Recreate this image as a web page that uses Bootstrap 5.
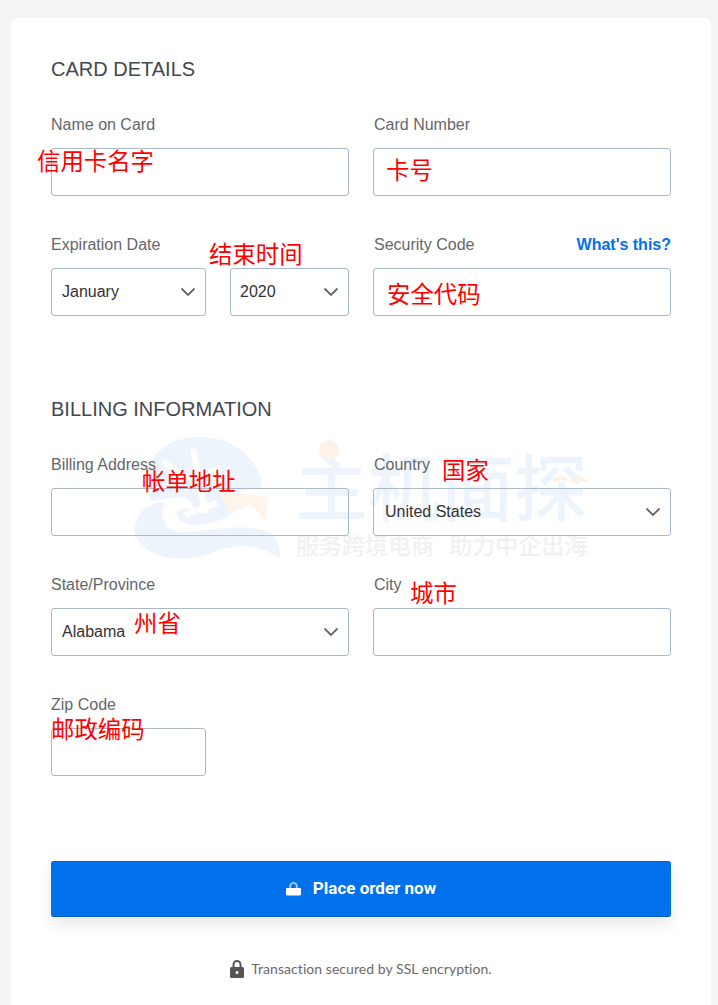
<!DOCTYPE html>
<html lang="en">
<head>
<meta charset="utf-8">
<title>Checkout</title>
<link href="https://cdn.jsdelivr.net/npm/bootstrap@5.3.0/dist/css/bootstrap.min.css" rel="stylesheet">
<style>
html,body{height:100%;overflow:hidden}
body{background:#f4f4f4;font-family:"Liberation Sans",Arial,sans-serif;color:#555}
.sheet{position:relative;margin:18px 7px 0 11px;background:#fff;border-radius:6px 6px 0 0;padding:39px 40px 0;height:987px;overflow:hidden}
.sec-title{font-size:20px;line-height:24px;font-weight:400;color:#44474d;margin:0}
.sec-gap-a{margin-top:32px}
.sec-gap-b{margin-top:81px}
.frow{margin-top:37px}
.frow.first{margin-top:0}
.flabel{display:block;font-size:16px;line-height:24px;height:24px;margin:0 0 11px;color:#63676b}
.rcol .flabel{padding-left:1px}
.finput,.fselect{display:block;width:100%;height:48px;border:1px solid #a9bac8;border-radius:3px;background-color:transparent;font-size:16px;color:#333;padding:0 10px;font-family:inherit}
.rcol .fselect{padding-left:11px}
.fselect{appearance:none;background-image:url("data:image/svg+xml,%3Csvg xmlns='http://www.w3.org/2000/svg' width='16' height='10' viewBox='0 0 16 10'%3E%3Cpath d='M1.500 1.500 8 8l6.500-6.500' fill='none' stroke='%23666' stroke-width='1.800'/%3E%3C/svg%3E");background-repeat:no-repeat;background-position:right 9px center}
.whats{font-size:16px;font-weight:700;color:#0070eb;text-decoration:none;line-height:24px}
.month-w{width:155px}
.year-w{width:119px;padding-left:9px}
.zip-w{width:155px}
.order-btn{display:flex;align-items:center;justify-content:center;gap:12px;width:100%;height:56px;margin-top:85px;background:#0071eb;border:0;border-bottom:1px solid #005cc0;border-top:1px solid #0063cf;border-radius:3px;color:#fff;font-size:17px;font-weight:700;box-shadow:0 8px 16px rgba(0,0,0,.09);font-family:Roboto,"Liberation Sans",sans-serif}
.secure{display:flex;align-items:center;justify-content:center;gap:7px;margin-top:40px;font-family:Lato,"Open Sans",sans-serif;font-size:14px;letter-spacing:.05px;line-height:24px;color:#6a6a6a}
.note{position:absolute;color:#f00;font-family:"Noto Sans CJK SC",sans-serif;font-size:23.400px;line-height:30px;white-space:nowrap;z-index:3}
.mark-w{position:absolute;left:0;top:0;width:100%;height:100%;pointer-events:none;z-index:0}
.mark-t{position:absolute;left:284px;top:420px;font-family:"Noto Sans CJK SC",sans-serif;font-size:73px;line-height:90px;font-weight:500;color:#edf4fb;white-space:nowrap}
.mark-s{position:absolute;left:285px;top:510px;font-family:"Noto Sans CJK SC",sans-serif;font-size:23px;line-height:32px;font-weight:500;color:#f1f1f1;white-space:nowrap;word-spacing:10px}
.mark-i{position:absolute;left:122px;top:419px}
.mark-d{position:absolute;left:306px;top:422px}
.sheet>*:not(.mark-w):not(.note){position:relative;z-index:1}
</style>
</head>
<body>
<div class="sheet">
  <div class="mark-w">
    <div class="mark-t">主机面探</div>
    <div class="mark-s">服务跨境电商 助力中企出海</div>
    <svg class="mark-i" width="150" height="130" viewBox="0 0 150 130" aria-hidden="true">
      <path d="M20 64C8 52 12 24 30 11 48-3 80-3 100 8c18 10 28 26 29 42L89 56l9 22C85 85 72 88 58 88 50 86 44 82 44 76c4-6 12-6 16-2 2-8-6-14-16-14-10 1-18 3-24 4z" fill="#edf4fb"/>
      <path d="M1 94C3 74 17 64 33 65 27 72 28 88 38 92 58 100 90 86 125 92c17 3 23 13 22 30-17-14-42-17-67-7-25 11-70 10-79-21z" fill="#edf4fb"/>
      <path d="M60 12 72 76M52 78 84 66M30 24l24 20M66 38l22-6" fill="none" stroke="#fff" stroke-width="6"/>
      <path d="m87 54 48 6-2 24-16-17-20 10z" fill="#fdf4ea"/>
    </svg>
    <svg class="mark-d" width="300" height="60" viewBox="0 0 300 60" aria-hidden="true">
      <circle cx="12" cy="10" r="10" fill="#fdf2e8"/>
      <path d="M236 41c5-5 10-5 15-1-5-1-10-1-15 1zM254 41c5-5 10-5 15 0-5-1-10-1-15 0z" fill="#fdf2e8" stroke="#fdf2e8" stroke-width="2"/>
    </svg>
  </div>

  <h2 class="sec-title">CARD DETAILS</h2>
  <div class="sec-gap-a">
    <div class="row gx-4 frow first">
      <div class="col-6"><label class="flabel">Name on Card</label><input class="finput" type="text"></div>
      <div class="col-6 rcol"><label class="flabel">Card Number</label><input class="finput" type="text"></div>
    </div>
    <div class="row gx-4 frow">
      <div class="col-6">
        <label class="flabel">Expiration Date</label>
        <div class="d-flex justify-content-between">
          <select class="fselect month-w"><option>January</option></select>
          <select class="fselect year-w"><option>2020</option></select>
        </div>
      </div>
      <div class="col-6 rcol">
        <div class="d-flex justify-content-between"><label class="flabel">Security Code</label><a class="whats" href="#">What's this?</a></div>
        <input class="finput" type="text">
      </div>
    </div>
  </div>

  <h2 class="sec-title sec-gap-b">BILLING INFORMATION</h2>
  <div class="sec-gap-a">
    <div class="row gx-4 frow first">
      <div class="col-6"><label class="flabel">Billing Address</label><input class="finput" type="text"></div>
      <div class="col-6 rcol"><label class="flabel">Country</label><select class="fselect"><option>United States</option></select></div>
    </div>
    <div class="row gx-4 frow">
      <div class="col-6"><label class="flabel">State/Province</label><select class="fselect"><option>Alabama</option></select></div>
      <div class="col-6 rcol"><label class="flabel">City</label><input class="finput" type="text"></div>
    </div>
    <div class="row gx-4 frow">
      <div class="col-6"><label class="flabel">Zip Code</label><input class="finput zip-w" type="text"></div>
    </div>
  </div>

  <button class="order-btn" type="button">
    <svg width="15" height="14" viewBox="0 0 16 14" aria-hidden="true"><path d="M4.500 6V4a3.500 3.500 0 0 1 7 0v2" fill="none" stroke="#a9cdf7" stroke-width="2"/><path d="M1 6h14a1 1 0 0 1 1 1v5.500a1.500 1.500 0 0 1-1.500 1.500h-13A1.500 1.500 0 0 1 0 12.500V7a1 1 0 0 1 1-1z" fill="#fff"/></svg>
    <span>Place order now</span>
  </button>
  <div class="secure">
    <svg width="14" height="18" viewBox="0 0 14 18" aria-hidden="true"><path d="M3.500 8V4.500a3.500 3.500 0 0 1 7 0V8" fill="none" stroke="#555" stroke-width="2"/><path fill-rule="evenodd" d="M1.500 7h11A1.500 1.500 0 0 1 14 8.500v8a1.500 1.500 0 0 1-1.500 1.500h-11A1.500 1.500 0 0 1 0 16.500v-8A1.500 1.500 0 0 1 1.500 7zM7 11a1.500 1.500 0 1 0 0 3 1.500 1.500 0 0 0 0-3z" fill="#555"/></svg>
    <span>Transaction secured by SSL encryption.</span>
  </div>

  <span class="note" style="left:26px;top:127px">信用卡名字</span>
  <span class="note" style="left:375px;top:136px">卡号</span>
  <span class="note" style="left:198px;top:220px">结束时间</span>
  <span class="note" style="left:376px;top:260px">安全代码</span>
  <span class="note" style="left:131px;top:447px">帐单地址</span>
  <span class="note" style="left:431px;top:436px">国家</span>
  <span class="note" style="left:123px;top:589px">州省</span>
  <span class="note" style="left:399px;top:559px">城市</span>
  <span class="note" style="left:40px;top:695px">邮政编码</span>
</div>
<script src="https://cdn.jsdelivr.net/npm/bootstrap@5.3.0/dist/js/bootstrap.bundle.min.js"></script>
</body>
</html>
